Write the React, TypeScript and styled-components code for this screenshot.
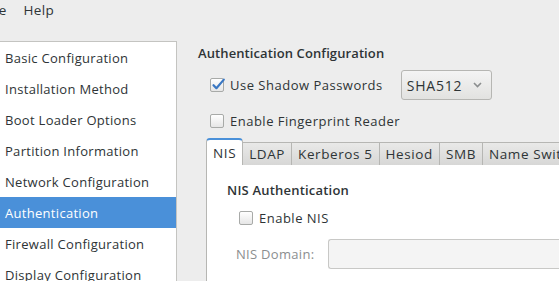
import React from 'react'
import styled, { createGlobalStyle } from 'styled-components'

const GlobalStyle = createGlobalStyle`
  html, body {
    margin: 0;
    padding: 0;
    background: #ededed;
    overflow: hidden;
  }
  body {
    font-family: 'Open Sans', 'DejaVu Sans', sans-serif;
    font-size: 13px;
    letter-spacing: 0.3px;
    color: #2e3436;
  }
`

const Window = styled.div`
  display: flex;
  flex-direction: column;
  width: 559px;
  height: 281px;
  overflow: hidden;
`

const MenuBar = styled.div`
  display: flex;
  align-items: center;
  height: 20px;
  margin-left: -16px;
  gap: 17px;
  font-size: 13.5px;
`

const MenuItem = styled.span`
  line-height: 18px;
`

const Body = styled.div`
  display: flex;
  flex: 1;
  padding-top: 21px;
  min-height: 0;
`

const Sidebar = styled.ul`
  list-style: none;
  margin: 0;
  padding: 0;
  width: 176px;
  flex-shrink: 0;
  background: #ffffff;
  border-top: 1px solid #c4c4c1;
  border-right: 1px solid #c4c4c1;
`

const SidebarRow = styled.li<{ $selected?: boolean }>`
  height: 31px;
  display: flex;
  align-items: center;
  padding-left: 5px;
  white-space: nowrap;
  background: ${(p) => (p.$selected ? '#4a90d9' : 'transparent')};
  color: ${(p) => (p.$selected ? '#ffffff' : '#2e3436')};
`

const Main = styled.div`
  flex: 1;
  display: flex;
  flex-direction: column;
  padding: 3px 0 0 21px;
  min-width: 0;
`

const Title = styled.div`
  font-weight: 600;
  letter-spacing: 0.1px;
  height: 18px;
  line-height: 18px;
  white-space: nowrap;
`

const CheckRow = styled.label<{ $top: number }>`
  display: flex;
  align-items: center;
  gap: 6px;
  margin-top: ${(p) => p.$top}px;
  padding-left: 12px;
  white-space: nowrap;
  letter-spacing: 0.5px;
`

const Box = styled.span`
  width: 12px;
  height: 12px;
  flex-shrink: 0;
  border: 1px solid #a8aaa8;
  border-radius: 2px;
  background: linear-gradient(#ffffff, #e6e6e6);
  position: relative;
  svg {
    position: absolute;
    left: 0;
    top: -2px;
  }
`

const Combo = styled.div`
  display: flex;
  align-items: center;
  justify-content: space-between;
  width: 91px;
  height: 30px;
  box-sizing: border-box;
  margin-left: 12px;
  padding: 0 9px 0 5px;
  border: 1px solid #b6b6b3;
  border-radius: 3px;
  background: linear-gradient(#f4f4f4, #e2e2e0);
  font-size: 14px;
  letter-spacing: 0.8px;
`

const Notebook = styled.div`
  display: flex;
  flex-direction: column;
  margin: 8px 0 0 8px;
  flex: 1;
  min-height: 0;
`

const TabStrip = styled.div`
  display: flex;
  align-items: flex-end;
  white-space: nowrap;
`

const Tab = styled.div<{ $active?: boolean }>`
  box-sizing: border-box;
  height: ${(p) => (p.$active ? 27 : 23)}px;
  padding: 0 6px;
  display: flex;
  align-items: ${(p) => (p.$active ? 'flex-end' : 'center')};
  padding-bottom: ${(p) => (p.$active ? 3 : 0)}px;
  border: 1px solid #b6b6b3;
  border-left-width: ${(p) => (p.$active ? 1 : 0)}px;
  border-bottom: none;
  border-top: ${(p) => (p.$active ? '2px solid #4a90d9' : '1px solid #b6b6b3')};
  border-radius: ${(p) => (p.$active ? '4px 4px 0 0' : '0')};
  background: ${(p) => (p.$active ? '#ffffff' : 'linear-gradient(#e9e9e8, #d7d7d6)')};
  font-size: 13.5px;
  letter-spacing: 0.6px;
`

const Page = styled.div`
  flex: 1;
  background: #ffffff;
  border-left: 1px solid #b6b6b3;
  padding: 16px 0 0 20px;
  display: flex;
  flex-direction: column;
`

const PageTitle = styled.div`
  font-weight: 600;
  letter-spacing: 0.2px;
  line-height: 18px;
  white-space: nowrap;
`

const FieldRow = styled.div`
  display: flex;
  align-items: center;
  margin-top: 12px;
  padding-left: 9px;
  gap: 14px;
`

const FieldLabel = styled.span`
  color: #8b8e8f;
  white-space: nowrap;
`

const Entry = styled.div`
  flex: 1;
  height: 30px;
  box-sizing: border-box;
  border: 1px solid #c8c8c6;
  border-right: none;
  border-radius: 3px 0 0 3px;
  background: #f4f4f4;
`

function Check({ checked }: { checked?: boolean }) {
  return (
    <Box>
      {checked && (
        <svg width="15" height="14" viewBox="0 0 15 14">
          <path d="M2.5 8.2 L5.4 11.2 L12.8 2.6" fill="none" stroke="#3b78c3" strokeWidth="2.2" strokeLinecap="round" strokeLinejoin="round" />
        </svg>
      )}
    </Box>
  )
}

const sections = [
  'Basic Configuration',
  'Installation Method',
  'Boot Loader Options',
  'Partition Information',
  'Network Configuration',
  'Authentication',
  'Firewall Configuration',
  'Display Configuration',
]

const tabs = ['NIS', 'LDAP', 'Kerberos 5', 'Hesiod', 'SMB', 'Name Switch']

export default function App() {
  return (
    <Window>
      <GlobalStyle />
      <MenuBar>
        <MenuItem>File</MenuItem>
        <MenuItem>Help</MenuItem>
      </MenuBar>
      <Body>
        <Sidebar>
          {sections.map((s) => (
            <SidebarRow key={s} $selected={s === 'Authentication'}>
              {s}
            </SidebarRow>
          ))}
        </Sidebar>
        <Main>
          <Title>Authentication Configuration</Title>
          <CheckRow $top={8}>
            <Check checked />
            <span>Use Shadow Passwords</span>
            <Combo>
              <span>SHA512</span>
              <svg width="9" height="6" viewBox="0 0 9 6">
                <path d="M1 1 L4.5 4.5 L8 1" fill="none" stroke="#8b8e8f" strokeWidth="1.6" />
              </svg>
            </Combo>
          </CheckRow>
          <CheckRow $top={12}>
            <Check />
            <span>Enable Fingerprint Reader</span>
          </CheckRow>
          <Notebook>
            <TabStrip>
              {tabs.map((t, i) => (
                <Tab key={t} $active={i === 0}>
                  {t}
                </Tab>
              ))}
            </TabStrip>
            <Page>
              <PageTitle>NIS Authentication</PageTitle>
              <CheckRow $top={10}>
                <Check />
                <span>Enable NIS</span>
              </CheckRow>
              <FieldRow>
                <FieldLabel>NIS Domain:</FieldLabel>
                <Entry />
              </FieldRow>
            </Page>
          </Notebook>
        </Main>
      </Body>
    </Window>
  )
}
